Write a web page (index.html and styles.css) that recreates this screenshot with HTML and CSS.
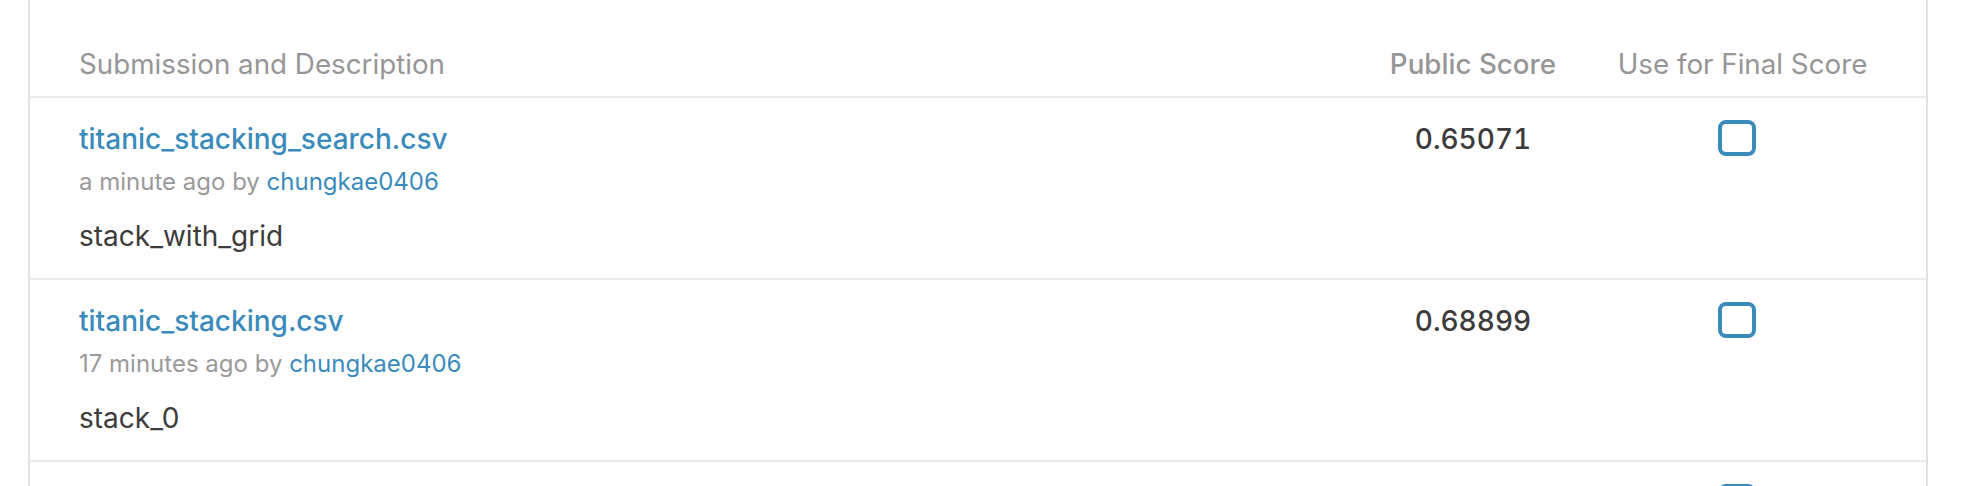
FILE: index.html
```html
<!DOCTYPE html>
<html lang="en">
<head>
<meta charset="utf-8">
<title>Submissions</title>
<link rel="stylesheet" href="styles.css">
</head>
<body>
<div class="card">
  <div class="row head">
    <div class="col-desc">Submission and Description</div>
    <div class="col-score sorted">Public Score</div>
    <div class="col-final">Use for Final Score</div>
  </div>
  <div class="row sub">
    <div class="col-desc">
      <a class="title" href="#">titanic_stacking_search.csv</a>
      <div class="meta">a minute ago by <a class="user" href="#">chungkae0406</a></div>
      <div class="desc">stack_with_grid</div>
    </div>
    <div class="col-score score">0.65071</div>
    <div class="col-final"><span class="check"></span></div>
  </div>
  <div class="row sub">
    <div class="col-desc">
      <a class="title" href="#">titanic_stacking.csv</a>
      <div class="meta">17 minutes ago by <a class="user" href="#">chungkae0406</a></div>
      <div class="desc">stack_0</div>
    </div>
    <div class="col-score score">0.68899</div>
    <div class="col-final"><span class="check"></span></div>
  </div>
  <div class="row sub">
    <div class="col-desc"></div>
    <div class="col-score score"></div>
    <div class="col-final"><span class="check"></span></div>
  </div>
</div>
</body>
</html>
```
FILE: styles.css
```css
html, body {
  margin: 0;
  padding: 0;
  background: #ffffff;
  overflow: hidden;
}
body {
  font-family: Inter, "Noto Sans", sans-serif;
  color: #3c4043;
}
.card {
  margin-left: 28px;
  width: 1900px;
  box-sizing: border-box;
  border-left: 2px solid #e2e2e2;
  border-right: 2px solid #e2e2e2;
}
.row {
  display: flex;
  border-bottom: 2px solid #ebebeb;
  padding-left: 49px;
  padding-right: 24px;
}
.head {
  height: 98px;
  box-sizing: border-box;
  align-items: flex-end;
  padding-bottom: 15px;
  font-size: 27.75px;
  line-height: 34px;
  color: #969696;
}
.col-desc {
  flex: 1;
  min-width: 0;
}
.col-score {
  width: 220px;
  text-align: center;
}
.col-final {
  width: 319px;
  display: flex;
  justify-content: center;
}
.sorted {
  font-weight: 500;
}
.sub {
  height: 182px;
  box-sizing: border-box;
  padding-top: 24px;
  align-items: flex-start;
}
.title {
  display: block;
  font-size: 28px;
  line-height: 34px;
  font-weight: 500;
  color: #3a8bbb;
  text-decoration: none;
}
.meta {
  margin-top: 11px;
  font-size: 24px;
  line-height: 30px;
  color: #9a9a9a;
}
.user {
  color: #3a8bbb;
  text-decoration: none;
}
.desc {
  margin-top: 22px;
  font-size: 28px;
  line-height: 34px;
  color: #3c3c3c;
}
.score {
  font-size: 28px;
  line-height: 34px;
  font-weight: 500;
  color: #3c3c3c;
  font-variant-numeric: tabular-nums;
}
.check {
  display: block;
  width: 38px;
  height: 36px;
  box-sizing: border-box;
  border: 4px solid #3a8bbb;
  border-radius: 8px;
  margin-top: -2px;
  margin-right: 12px;
}
```
